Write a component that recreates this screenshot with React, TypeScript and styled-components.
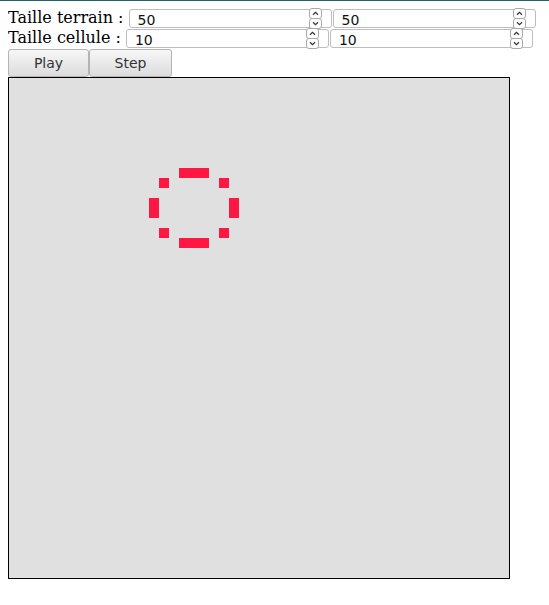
import React from "react";
import styled, { createGlobalStyle } from "styled-components";

const Global = createGlobalStyle`
  html {
    min-height: 100%;
    box-shadow: inset 0 1px 0 #22606e;
    background: #fff;
  }
  body {
    margin: 8px;
    font-family: "DejaVu Serif", serif;
    font-size: 16px;
    color: #000;
  }
`;

const Row = styled.div`
  display: flex;
  align-items: center;
  height: 20px;
`;

const Label = styled.span`
  font-family: "DejaVu Serif", serif;
  font-size: 16px;
  white-space: pre;
  margin-right: 5px;
  line-height: 20px;
`;

const Field = styled.div`
  position: relative;
  box-sizing: border-box;
  width: 203px;
  height: 19px;
  margin-right: 1px;
  border: 1px solid #bdbdbd;
  border-radius: 3px;
  background: #fff;
`;

const NumInput = styled.input`
  box-sizing: border-box;
  width: 100%;
  height: 100%;
  border: none;
  outline: none;
  background: transparent;
  padding: 0 0 0 8px;
  font-family: "DejaVu Sans", sans-serif;
  font-size: 14px;
  color: #111;
`;

const Spinner = styled.div`
  position: absolute;
  right: 9px;
  top: -2px;
  display: flex;
  flex-direction: column;
  z-index: 1;
`;

const SpinBox = styled.div<{ $down?: boolean }>`
  box-sizing: border-box;
  width: 13px;
  height: 11px;
  margin-top: ${(p) => (p.$down ? "-1px" : "0")};
  border: 1px solid #a9a9a9;
  border-radius: 3px;
  background: #fff;
  display: flex;
  align-items: center;
  justify-content: center;
`;

const Buttons = styled.div`
  display: flex;
  height: 28px;
  margin-top: 1px;
`;

const Btn = styled.button<{ $w: number }>`
  box-sizing: border-box;
  width: ${(p) => p.$w}px;
  height: 28px;
  margin: 0;
  border: 1px solid #b4b4b4;
  border-radius: 3px;
  background: linear-gradient(#f7f7f7, #dcdcdc);
  font-family: "DejaVu Sans", sans-serif;
  font-size: 14px;
  color: #333;
  padding: 0;
`;

const Board = styled.div`
  width: 500px;
  height: 500px;
  border: 1px solid #000;
  background: #e0e0e0;
  svg {
    display: block;
  }
`;

const Chevron = ({ down }: { down?: boolean }) => (
  <svg width="7" height="5" viewBox="0 0 7 5">
    <path
      d={down ? "M1 1.2 L3.5 3.6 L6 1.2" : "M1 3.8 L3.5 1.4 L6 3.8"}
      fill="none"
      stroke="#333"
      strokeWidth="1.2"
    />
  </svg>
);

const NumberField = ({ value }: { value: string }) => (
  <Field>
    <NumInput type="text" defaultValue={value} />
    <Spinner>
      <SpinBox>
        <Chevron />
      </SpinBox>
      <SpinBox $down>
        <Chevron down />
      </SpinBox>
    </Spinner>
  </Field>
);

const cells: [number, number][] = [
  [17, 9], [18, 9], [19, 9],
  [15, 10], [21, 10],
  [14, 12], [14, 13], [22, 12], [22, 13],
  [15, 15], [21, 15],
  [17, 16], [18, 16], [19, 16],
];

export default function App() {
  return (
    <>
      <Global />
      <Row>
        <Label>Taille terrain :</Label>
        <NumberField value="50" />
        <NumberField value="50" />
      </Row>
      <Row>
        <Label>Taille cellule :</Label>
        <NumberField value="10" />
        <NumberField value="10" />
      </Row>
      <Buttons>
        <Btn $w={81}>Play</Btn>
        <Btn $w={83}>Step</Btn>
      </Buttons>
      <Board>
        <svg width="500" height="500" viewBox="0 0 500 500">
          {cells.map(([x, y]) => (
            <rect key={`${x}-${y}`} x={x * 10} y={y * 10} width="10" height="10" fill="#ff1744" />
          ))}
        </svg>
      </Board>
    </>
  );
}
